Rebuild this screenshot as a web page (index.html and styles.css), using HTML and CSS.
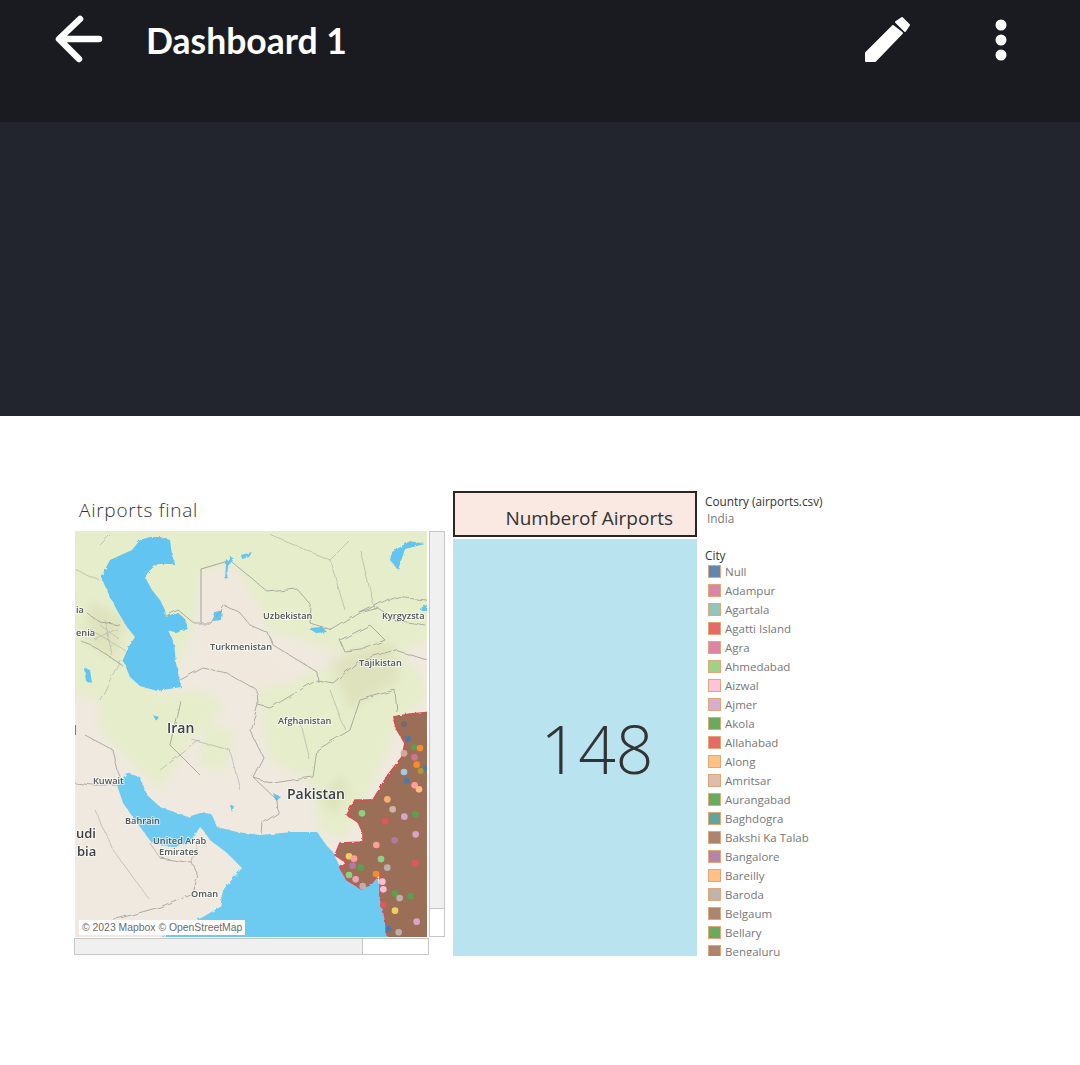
FILE: index.html
```html
<!DOCTYPE html>
<html>
<head>
  <title>Dashboard 1</title>
  <link rel="stylesheet" href="styles.css">
</head>
<body>

  <header class="topbar">
    <svg class="back-icon" viewBox="50 12 56 54" aria-label="Back">
      <path d="M80 19 L59 39 L79 59 M60 39 H99" />
    </svg>
    <h1>Dashboard 1</h1>
    <svg class="edit-icon" viewBox="862 14 52 52" aria-label="Edit">
      <path d="M866 61 V53 L893 26 L902 33 L875 61 Z" />
      <path d="M896 22 L902 18 L909 25 L905 31 Z" />
    </svg>
    <svg class="more-icon" viewBox="0 0 12 42" aria-label="More">
      <circle cx="6" cy="6" r="5.5" />
      <circle cx="6" cy="21" r="5.5" />
      <circle cx="6" cy="36" r="5.5" />
    </svg>
  </header>

  <div class="band"></div>

  <main class="dashboard">
    <section class="map-col">
      <h2 class="map-title">Airports final</h2>
      <div class="map-row">
        <div class="map">
          <svg viewBox="75 531 352 406">
            <defs>
              <filter id="soft"><feGaussianBlur stdDeviation="5" /></filter>
              <filter id="rough" x="-5%" y="-5%" width="110%" height="110%">
                <feTurbulence type="fractalNoise" baseFrequency="0.07" numOctaves="3" seed="4" />
                <feDisplacementMap in="SourceGraphic" scale="5" />
              </filter>
              <filter id="rough-fine" x="-5%" y="-5%" width="110%" height="110%">
                <feTurbulence type="fractalNoise" baseFrequency="0.25" numOctaves="2" seed="9" />
                <feDisplacementMap in="SourceGraphic" scale="3" />
              </filter>
            </defs>
            <rect x="75" y="531" width="352" height="406" fill="#efe9df" />

            <!-- terrain -->
            <g fill="#e6edcb" filter="url(#soft)">
              <path d="M60 520 H440 V640 L360 660 L300 640 L268 630 L250 600 L232 565 L200 575 L198 622 L180 660 L150 700 L100 700 L60 690 Z" />
              <path d="M100 700 L200 690 L225 705 L190 740 L160 790 L130 760 L100 730 Z" />
              <path d="M258 690 L320 670 L400 650 L430 690 L395 730 L370 790 L345 840 L320 830 L310 780 L270 760 Z" />
              <path d="M205 720 L235 735 L225 770 L200 765 Z" />
            </g>
            <g fill="#dcdfb8" opacity="0.7" filter="url(#soft)">
              <path d="M330 660 L390 640 L400 680 L350 710 Z" />
              <path d="M320 800 L340 775 L350 790 L335 815 Z" />
              <path d="M90 600 L125 620 L115 660 L85 640 Z" />
            </g>
            <path fill="#f0e8dd" filter="url(#soft)" d="M205 575 L232 570 L262 610 L262 650 L305 680 L250 685 L205 660 L195 630 Z" />

            <!-- water -->
            <g fill="#62c4f0" filter="url(#rough-fine)">
              <path d="M150 537 L160 537 L170 540 L172 555 L175 564 L158 564 L150 570 L145 577 L152 590 L160 600 L165 610 L166 617 L177 612 L184 618 L188 627 L177 633 L168 630 L174 643 L176 663 L181 687 L157 691 L140 686 L130 677 L123 660 L128 648 L135 637 L127 627 L118 612 L110 597 L101 577 L110 560 L132 550 L140 540 Z" />
              <path d="M230 556 L234 559 L228 566 L227 578 L225 579 L226 563 Z" />
              <path d="M241 555 L252 552 L249 557 L242 559 Z" />
              <path d="M215 612 L222 610 L221 620 L213 621 Z" />
              <path d="M308 628 L322 627 L327 632 L316 633 Z" />
              <path d="M392 552 L410 541 L425 544 L405 549 L398 570 L390 560 Z" />
              <path d="M422 607 L427 605 V611 L421 611 Z" />
              <path d="M84 668 L90 670 L92 683 L86 681 Z" />
              <path d="M153 715 L159 717 L156 721 Z" />
              <path d="M273 793 L281 797 L276 801 Z" />
              <path d="M230 805 L234 806 L232 812 Z" />
            </g>
            <path fill="#6dcbf1" filter="url(#rough-fine)" d="M117 785 L127 773 L140 777 L147 795 L160 807 L188 817 L203 812 L212 815 L217 827 L237 832 L260 835 L293 832 L317 832 L327 846 L333 852 L340 867 L347 877 L363 886 L377 877 L385 907 L388 940 H155 L203 917 L220 907 L223 890 L242 868 L227 853 L210 840 L203 830 L200 827 L190 843 L173 847 L152 843 L140 827 L123 803 Z" />

            <!-- borders -->
            <g fill="none" stroke="#9a9a96" stroke-width="0.8" filter="url(#rough)">
              <path d="M165 615 L177 609 L195 624 H212 L223 605 L240 613 L250 625 L268 633 L273 645 L317 672" />
              <path d="M232 562 L268 592 L297 589 L311 605 L310 623 L332 630 L360 613 L393 597 L427 600" />
              <path d="M180 680 L203 668 L227 673 L257 690 L258 705 L270 708 L317 680 L333 683 L360 660 L395 650 L427 660" />
              <path d="M317 672 L318 682 M340 640 L370 625 L385 640 L362 650 L345 652 Z M360 613 L378 608 L395 620 L425 625" />
              <path d="M250 730 L263 757 L253 777 L273 783 L313 777 L317 750 L350 730 L360 700 L395 690 L397 712" />
              <path d="M253 777 L277 800 L278 813 L263 823 L262 835" />
              <path d="M258 705 L250 730" />
              <path d="M75 783 L93 785 L117 785" />
              <path d="M160 858 L192 863 L197 873 L192 893 L160 907 L113 920" />
              <path d="M87 613 L100 622 L120 625 M80 640 L100 650 L122 665" />
              <path d="M85 735 L113 750 L120 780 M180 700 L170 745 L200 775" />
              <path d="M150 843 L160 858 M197 843 L192 863" stroke-width="0.6" />
              <path d="M192 740 L230 750 L240 790 M120 660 L100 700 M300 720 L310 760 M330 690 L345 730" stroke-width="0.5" />
              <path d="M100 545 L110 535 M75 570 L100 580 M270 535 L330 560 L350 540 M330 560 L345 610 M360 550 L375 610 M200 740 L160 770 M95 810 L113 850 L150 900" stroke-width="0.5" />
              <path d="M100 625 L120 640 M95 640 L118 630 M105 620 L112 655 M90 630 L125 650" stroke="#b0b0ac" stroke-width="0.6" />
            </g>
            <path fill="none" stroke="#a8a8a8" stroke-width="1.1" d="M201 569 L228 561 M201 569 V624" />
            <path class="clip-sliver" d="M75 725 V735" />

            <!-- India -->
            <path fill="#9b6e58" stroke="#d65050" stroke-width="1.6" filter="url(#rough-fine)" d="M393 717 L410 714 L432 712 V942 H388 L385 917 L380 897 L380 873 L370 885 L360 888 L347 880 L340 868 L347 863 L335 855 L340 843 L363 842 L363 833 L358 822 L347 815 L355 800 L373 800 L388 775 L402 757 L405 743 L397 730 Z" />

            <!-- airports -->
            <g transform="translate(330 700) scale(.3333)">
              <circle cx="222" cy="73" r="9" fill="#7a6a66" />
              <circle cx="234" cy="116" r="9" fill="#4e79a7" />
              <circle cx="252" cy="142" r="9" fill="#59a14f" />
              <circle cx="270" cy="144" r="10" fill="#f28e2b" />
              <circle cx="254" cy="172" r="10" fill="#d37295" />
              <circle cx="222" cy="160" r="10" fill="#d4a6a0" />
              <circle cx="260" cy="194" r="10" fill="#f28e2b" />
              <circle cx="222" cy="216" r="10" fill="#a0cbe8" />
              <circle cx="272" cy="213" r="9" fill="#b6992d" />
              <circle cx="288" cy="205" r="9" fill="#4e79a7" />
              <circle cx="230" cy="242" r="9" fill="#4e79a7" />
              <circle cx="254" cy="256" r="10" fill="#ff9d9a" />
              <circle cx="267" cy="268" r="10" fill="#ffbe7d" />
              <circle cx="172" cy="298" r="10" fill="#f5b26b" />
              <circle cx="188" cy="328" r="10" fill="#d4b5a5" />
              <circle cx="223" cy="350" r="10" fill="#d4a6c8" />
              <circle cx="256" cy="343" r="10" fill="#59a14f" />
              <circle cx="96" cy="340" r="10" fill="#8cd17d" />
              <circle cx="166" cy="364" r="10" fill="#e15759" />
              <circle cx="257" cy="403" r="10" fill="#d4a6c8" />
              <circle cx="194" cy="421" r="10" fill="#b07aa1" />
              <circle cx="139" cy="435" r="10" fill="#ff9d9a" />
              <circle cx="57" cy="469" r="10" fill="#f1ce63" />
              <circle cx="72" cy="476" r="10" fill="#ff9d9a" />
              <circle cx="68" cy="497" r="10" fill="#b07aa1" />
              <circle cx="93" cy="503" r="10" fill="#59a14f" />
              <circle cx="153" cy="477" r="10" fill="#8cd17d" />
              <circle cx="172" cy="503" r="10" fill="#bab0ac" />
              <circle cx="256" cy="489" r="10" fill="#e15759" />
              <circle cx="138" cy="522" r="10" fill="#f28e2b" />
              <circle cx="57" cy="525" r="10" fill="#8cd17d" />
              <circle cx="77" cy="538" r="10" fill="#e9a6b8" />
              <circle cx="98" cy="558" r="10" fill="#bab0ac" />
              <circle cx="157" cy="545" r="10" fill="#fabfd2" />
              <circle cx="160" cy="568" r="10" fill="#fabfd2" />
              <circle cx="195" cy="580" r="10" fill="#59a14f" />
              <circle cx="209" cy="594" r="10" fill="#bab0ac" />
              <circle cx="242" cy="589" r="10" fill="#59a14f" />
              <circle cx="160" cy="615" r="10" fill="#e15759" />
              <circle cx="195" cy="632" r="10" fill="#f1ce63" />
              <circle cx="260" cy="665" r="10" fill="#d4a6c8" />
              <circle cx="175" cy="686" r="9" fill="#4e79a7" />
              <circle cx="206" cy="697" r="10" fill="#bab0ac" />
            </g>

            <!-- labels -->
            <g class="labels">
              <text x="263" y="619">Uzbekistan</text>
              <text x="382" y="619">Kyrgyzsta</text>
              <text x="210" y="650">Turkmenistan</text>
              <text x="359" y="666">Tajikistan</text>
              <text x="278" y="724">Afghanistan</text>
              <text x="93" y="784">Kuwait</text>
              <text x="125" y="824">Bahrain</text>
              <text x="153" y="844">United Arab</text>
              <text x="159" y="855">Emirates</text>
              <text x="191" y="897">Oman</text>
              <text x="76" y="613">ia</text>
              <text x="76" y="636">enia</text>
            </g>
            <g class="labels labels-big">
              <text x="167" y="733">Iran</text>
              <text x="287" y="799">Pakistan</text>
              <text class="label-edge" x="76" y="838">udi</text>
              <text class="label-edge" x="77" y="856">bia</text>
            </g>
          </svg>
          <div class="attribution">© 2023 Mapbox © OpenStreetMap</div>
        </div>
        <div class="scroll-v"><div class="scroll-v-thumb"></div></div>
      </div>
      <div class="scroll-h"><div class="scroll-h-thumb"></div></div>
    </section>

    <section class="kpi-col">
      <div class="kpi-head">Numberof Airports</div>
      <div class="kpi-value">148</div>
    </section>

    <aside class="legend">
      <div class="legend-title">Country (airports.csv)</div>
      <div class="legend-country">India</div>
      <div class="legend-title legend-city">City</div>
      <ul class="legend-list">
        <li><span class="swatch c-blue"></span>Null</li>
        <li><span class="swatch c-rose"></span>Adampur</li>
        <li><span class="swatch c-teal"></span>Agartala</li>
        <li><span class="swatch c-red"></span>Agatti Island</li>
        <li><span class="swatch c-rose"></span>Agra</li>
        <li><span class="swatch c-lime"></span>Ahmedabad</li>
        <li><span class="swatch c-pink"></span>Aizwal</li>
        <li><span class="swatch c-mauve"></span>Ajmer</li>
        <li><span class="swatch c-green"></span>Akola</li>
        <li><span class="swatch c-red"></span>Allahabad</li>
        <li><span class="swatch c-peach"></span>Along</li>
        <li><span class="swatch c-sand"></span>Amritsar</li>
        <li><span class="swatch c-green"></span>Aurangabad</li>
        <li><span class="swatch c-sea"></span>Baghdogra</li>
        <li><span class="swatch c-brown"></span>Bakshi Ka Talab</li>
        <li><span class="swatch c-purple"></span>Bangalore</li>
        <li><span class="swatch c-peach"></span>Bareilly</li>
        <li><span class="swatch c-grey"></span>Baroda</li>
        <li><span class="swatch c-brown"></span>Belgaum</li>
        <li><span class="swatch c-green"></span>Bellary</li>
        <li><span class="swatch c-brown"></span>Bengaluru</li>
      </ul>
    </aside>
  </main>

</body>
</html>
```

FILE: styles.css
```css
* {
  box-sizing: border-box;
}
body {
  margin: 0;
  background: #ffffff;
  font-family: 'Open Sans', sans-serif;
  color: #333;
}

/* top bar */
.topbar {
  display: flex;
  align-items: flex-start;
  height: 122px;
  padding: 12px 0 0 50px;
  background: #191b21;
}
.topbar h1 {
  margin: 5px 0 0 40px;
  font-family: 'Lato', sans-serif;
  font-size: 35.5px;
  font-weight: 700;
  line-height: 48px;
  color: #ffffff;
}
.back-icon {
  width: 56px;
  height: 54px;
}
.back-icon path {
  fill: none;
  stroke: #ffffff;
  stroke-width: 6.5;
  stroke-linecap: round;
  stroke-linejoin: round;
}
.edit-icon {
  width: 52px;
  height: 52px;
  margin: 2px 0 0 auto;
  fill: #ffffff;
  stroke: #ffffff;
  stroke-width: 2;
  stroke-linejoin: round;
}
.more-icon {
  width: 12px;
  height: 42px;
  margin: 7px 73px 0 81px;
  fill: #ffffff;
}
.band {
  height: 294px;
  background: #22252e;
}

/* dashboard */
.dashboard {
  display: flex;
  align-items: flex-start;
  height: 649px;
  padding: 75px 0 0 74px;
  overflow: hidden;
}
.map-col {
  width: 355px;
  margin-right: 24px;
}
.map-title {
  height: 40px;
  margin: 0;
  padding: 7px 0 0 5px;
  font-size: 19px;
  font-weight: 300;
  line-height: 25px;
  letter-spacing: 0.75px;
  color: #333;
}
.map-row {
  display: flex;
  width: 371px;
}
.map {
  position: relative;
  width: 352px;
  height: 406px;
  margin-left: 1px;
}
.map svg {
  display: block;
  width: 352px;
  height: 406px;
  filter: blur(0.4px);
}
.clip-sliver {
  fill: none;
  stroke: #555;
  stroke-width: 1.5;
}
.labels text {
  font-family: 'Open Sans', sans-serif;
  font-size: 9.2px;
  font-weight: 600;
  fill: #50565a;
  stroke: rgba(255, 255, 255, 0.6);
  stroke-width: 2px;
  paint-order: stroke;
}
.labels-big text {
  font-size: 14px;
  fill: #3a3f42;
}
.labels-big .label-edge {
  font-size: 13px;
}
.attribution {
  position: absolute;
  left: 4px;
  bottom: 2px;
  padding: 0 3px;
  background: #ffffff;
  font-family: 'Liberation Sans', sans-serif;
  font-size: 10.4px;
  line-height: 15px;
  white-space: nowrap;
  color: #6b6b6b;
}
.scroll-v {
  width: 16px;
  height: 406px;
  margin-left: 2px;
  border: 1px solid #c6c6c6;
  background: #ffffff;
}
.scroll-v-thumb {
  height: 377px;
  background: #f0f0f0;
  border-bottom: 1px solid #c6c6c6;
}
.scroll-h {
  width: 355px;
  height: 17px;
  margin: 1px 0 0 0;
  border: 1px solid #c6c6c6;
  background: #ffffff;
}
.scroll-h-thumb {
  width: 288px;
  height: 100%;
  background: #f0f0f0;
  border-right: 1px solid #c6c6c6;
}

/* number of airports */
.kpi-col {
  width: 244px;
}
.kpi-head {
  height: 46px;
  padding: 13px 22px 0 0;
  border: 2px solid #2b2523;
  background: #f9e9e2;
  font-size: 19px;
  line-height: 25px;
  text-align: right;
  color: #333;
}
.kpi-value {
  display: flex;
  align-items: center;
  justify-content: center;
  height: 417px;
  margin-top: 2px;
  padding: 0 0 0 44px;
  background: #bae3f0;
  font-size: 66px;
  font-weight: 300;
  color: #333;
}

/* legend */
.legend {
  width: 160px;
  height: 465px;
  margin: 0 0 0 8px;
  overflow: hidden;
  font-size: 11.8px;
}
.legend-title {
  line-height: 20px;
  color: #333;
}
.legend-country {
  padding-left: 2px;
  line-height: 15px;
  color: #777;
}
.legend-city {
  margin-top: 19px;
}
.legend-list {
  margin: -3px 0 0;
  padding: 0 0 0 3px;
  list-style: none;
}
.legend-list li {
  display: flex;
  align-items: center;
  gap: 4px;
  height: 19px;
  font-size: 11.5px;
  color: #777;
  white-space: nowrap;
}
.swatch {
  width: 13px;
  height: 13px;
  border: 1.5px solid #e0a878;
}
.c-blue { background: #5f87b0; }
.c-rose { background: #dd85a8; }
.c-teal { background: #93c5bd; }
.c-red { background: #e8696a; }
.c-lime { background: #9bd487; }
.c-pink { background: #fcc5d6; }
.c-mauve { background: #d4add0; }
.c-green { background: #69ab5e; }
.c-peach { background: #ffc284; }
.c-sand { background: #dcbdb0; }
.c-sea { background: #5fa5a0; }
.c-brown { background: #ab8570; }
.c-purple { background: #b584ac; }
.c-grey { background: #bdb5ad; }
```
